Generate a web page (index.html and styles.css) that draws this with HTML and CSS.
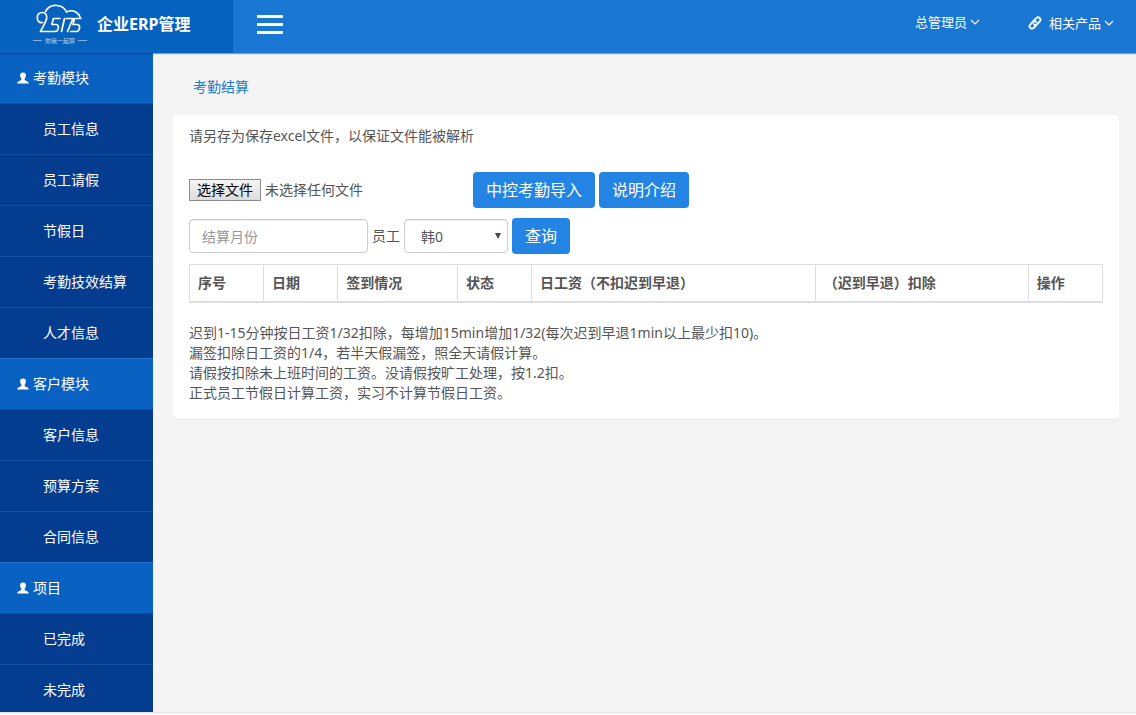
FILE: index.html
```html
<!DOCTYPE html>
<html lang="zh-CN">
<head>
<meta charset="utf-8">
<meta name="viewport" content="width=device-width, initial-scale=1">
<title>企业ERP管理</title>
<link rel="stylesheet" href="styles.css">
</head>
<body>
<svg class="symbols" aria-hidden="true">
  <symbol id="user" viewBox="0 0 12 12"><path d="M6 0.500C3.900.5 3 1.800 3.100 3.600c.1 1.500.6 2.300 1.200 3v1.300C3.700 8.700.4 9 .2 11.500h11.600C11.600 9 8.300 8.700 7.700 7.900V6.600c.6-.7 1.100-1.500 1.200-3C9 1.800 8.100.5 6 .5z" fill="currentColor"/></symbol>
  <symbol id="chevron" viewBox="0 0 10 6"><path d="M1 1l4 4 4-4" fill="none" stroke="currentColor" stroke-width="1.200"/></symbol>
</svg>
<header class="topbar">
  <div class="brand">
    <svg class="logo" viewBox="0 0 56 42" role="img" aria-label="25175">
      <g fill="none" stroke="currentColor" stroke-width="1.700" stroke-linejoin="round" stroke-linecap="round">
        <path d="M9.500 19.500c-3.200.8-5.200-1.500-5.200-4.500 0-3.500 2.200-5.500 5-5.500 3.500 0 5.200 2.800 4.200 6.500-.8 3.500-3.500 7.500-6 12.500h8"/>
        <path d="M12.500 8.500c2-4 6.500-6.300 11-6 5 .3 8.500 2.800 10 6.500 4-1.800 7.500-1.500 10 .5 1.800 1.200 3 2.800 3.500 4.500"/>
        <path d="M27 15.500h-6.500l-1.700 6h4.500c3.200 0 2.700 7-1.300 7h-5.500M31.500 15.500l-3 13M33.500 15.500h6.500l-5.500 13M48 15.500h-6.500l-1.500 6h4.500c3.200 0 2.700 7-1.300 7h-5.500"/>
      </g>
      <path d="M0 37.500h9M45 37.500h9" stroke="currentColor" opacity=".5"/>
      <text class="logo-slogan" x="27" y="40" text-anchor="middle">你我一起算</text>
    </svg>
    <h1 class="brand-name">企业ERP管理</h1>
  </div>
  <button class="menu-toggle" type="button" aria-label="切换菜单"><span></span><span></span><span></span></button>
  <nav class="top-links" aria-label="账户">
    <a href="#">总管理员<svg class="chevron"><use href="#chevron"/></svg></a>
    <a href="#" class="products"><svg class="link-icon" viewBox="0 0 14 14"><g fill="none" stroke="currentColor" stroke-width="1.900" stroke-linecap="round"><path d="M5.500 5L8.300 2.100a2.300 2.300 0 0 1 3.500 3.200L9.300 8a2.300 2.300 0 0 1-3.300.2"/><path d="M8.500 9l-2.800 2.900a2.300 2.300 0 0 1-3.500-3.200L4.700 6A2.300 2.300 0 0 1 8 5.800"/></g></svg>相关产品<svg class="chevron"><use href="#chevron"/></svg></a>
  </nav>
</header>
<div class="layout">
  <nav class="sidebar" aria-label="主菜单">
    <a class="section" href="#"><svg class="user-icon"><use href="#user"/></svg>考勤模块</a>
    <a href="#">员工信息</a>
    <a href="#">员工请假</a>
    <a href="#">节假日</a>
    <a href="#">考勤技效结算</a>
    <a href="#">人才信息</a>
    <a class="section" href="#"><svg class="user-icon"><use href="#user"/></svg>客户模块</a>
    <a href="#">客户信息</a>
    <a href="#">预算方案</a>
    <a href="#">合同信息</a>
    <a class="section" href="#"><svg class="user-icon"><use href="#user"/></svg>项目</a>
    <a href="#">已完成</a>
    <a href="#">未完成</a>
  </nav>
  <main class="content">
    <a class="crumb" href="#">考勤结算</a>
    <section class="panel">
      <p class="hint">请另存为保存excel文件，以保证文件能被解析</p>
      <form class="import-row">
        <div class="file-field">
          <input class="file-input" type="file" id="file">
          <label class="file-button" for="file">选择文件</label>
          <span>未选择任何文件</span>
        </div>
        <button class="btn" type="button">中控考勤导入</button>
        <button class="btn" type="button">说明介绍</button>
      </form>
      <form class="search-row">
        <input class="field month" type="text" placeholder="结算月份" aria-label="结算月份">
        <label for="staff">员工</label>
        <div class="select-wrap">
          <select class="field staff" id="staff"><option>韩0</option></select>
        </div>
        <button class="btn" type="button">查询</button>
      </form>
      <table class="records">
        <colgroup><col class="c-small"><col class="c-small"><col class="c-sign"><col class="c-small"><col class="c-wage"><col class="c-deduct"><col class="c-small"></colgroup>
        <thead><tr><th>序号</th><th>日期</th><th>签到情况</th><th>状态</th><th>日工资（不扣迟到早退）</th><th>（迟到早退）扣除</th><th>操作</th></tr></thead>
      </table>
      <p class="rules">迟到1-15分钟按日工资1/32扣除，每增加15min增加1/32(每次迟到早退1min以上最少扣10)。<br>漏签扣除日工资的1/4，若半天假漏签，照全天请假计算。<br>请假按扣除未上班时间的工资。没请假按旷工处理，按1.2扣。<br>正式员工节假日计算工资，实习不计算节假日工资。</p>
    </section>
  </main>
</div>
<footer class="page-end"></footer>
</body>
</html>
```
FILE: styles.css
```css
* { box-sizing: border-box; }

body {
  margin: 0;
  height: 100vh;
  display: flex;
  flex-direction: column;
  overflow: hidden;
  background: #f4f4f4;
  color: #555;
  font: 14px/20px "Noto Sans", "Noto Sans CJK SC", sans-serif;
}

a { color: inherit; text-decoration: none; }
p, h1 { margin: 0; }
button, input, select { font-family: inherit; }

.symbols { position: absolute; width: 0; height: 0; }

.topbar {
  flex: none;
  height: 53px;
  display: flex;
  background: #1976d3;
  color: #fff;
  box-shadow: 0 1px 1px rgba(0, 20, 70, .4);
  z-index: 1;
}

.brand {
  width: 233px;
  display: flex;
  align-items: center;
  padding: 0 0 6px 33px;
  gap: 8px;
  background: #0562bf;
}

.logo { width: 56px; height: 42px; flex: none; }
.logo-slogan { font-size: 6px; fill: currentColor; opacity: .7; }
.brand-name { font-size: 16px; line-height: 24px; font-weight: 700; white-space: nowrap; }

.menu-toggle {
  align-self: center;
  display: flex;
  flex-direction: column;
  gap: 5px;
  margin: 0 0 5px 24px;
  padding: 0;
  border: 0;
  background: none;
}

.menu-toggle span { width: 26px; height: 3px; background: #fff; }

.top-links {
  margin-left: auto;
  padding: 0 22px 9px 0;
  display: flex;
  align-items: center;
  gap: 48px;
  font-size: 13px;
}

.top-links a { display: flex; align-items: center; }
.top-links .products { padding-top: 2px; }
.chevron { width: 10px; height: 6px; margin-left: 3px; }
.link-icon { width: 14px; height: 14px; margin-right: 7px; }

.layout { flex: 1; min-height: 0; display: flex; }

.sidebar {
  flex: none;
  width: 153px;
  overflow: hidden;
  background: #043d90;
  color: #fff;
}

.sidebar a {
  display: flex;
  align-items: center;
  height: 51px;
  padding-left: 43px;
  border-top: 1px solid #134f9f;
}

.sidebar .section { padding-left: 17px; background: #0962c2; border-color: #1f70ca; }
.sidebar .section:first-child { height: 50px; border-top: 0; }
.user-icon { width: 12px; height: 12px; margin-right: 4px; }

.content { flex: 1; min-width: 0; padding: 24px 17px 0 20px; }
.crumb { display: block; margin: 0 0 18px 20px; color: #2779c6; }

.panel {
  padding: 11px 16px 16px;
  border-radius: 4px;
  background: #fff;
  box-shadow: 0 1px 1px rgba(0, 0, 0, .05);
}

.import-row { display: flex; align-items: center; gap: 4px; margin-top: 26px; }
.file-field { position: relative; display: flex; align-items: center; gap: 4px; width: 280px; }
.file-input { position: absolute; inset: 0; width: 100%; opacity: 0; }

.file-button {
  padding: 0 7px;
  border: 1px solid #8c8c8c;
  background: linear-gradient(#f5f5f5, #dcdcdc);
  color: #000;
}

.btn {
  height: 36px;
  padding: 0 13px;
  border: 0;
  border-radius: 4px;
  background: #2484e3;
  color: #fff;
  font-size: 16px;
  line-height: 24px;
}

.search-row { display: flex; align-items: center; gap: 4px; margin: 10px 0; }

.field {
  height: 34px;
  border: 1px solid #ccc;
  border-radius: 4px;
  background: #fff;
  box-shadow: inset 0 1px 1px rgba(0, 0, 0, .075);
  color: #555;
  font-size: 14px;
}

.field::placeholder { color: #999; }
.month { width: 179px; padding: 0 12px; }
.select-wrap { position: relative; }
.staff { display: block; width: 104px; padding: 0 16px; appearance: none; }

.select-wrap::after {
  content: "";
  position: absolute;
  top: 14px;
  right: 7px;
  border: 3px solid transparent;
  border-top: 6px solid #444;
  border-bottom: 0;
  pointer-events: none;
}

.records { width: 100%; table-layout: fixed; border-collapse: collapse; }
.records th { padding: 8px; border: 1px solid #ddd; border-bottom-width: 2px; text-align: left; white-space: nowrap; }
.c-small { width: 8.1%; }
.c-sign { width: 13.1%; }
.c-wage { width: 31%; }
.c-deduct { width: 23.3%; }

.rules { margin-top: 20px; }

.page-end { flex: none; height: 3px; border-top: 1px solid #e5e5e5; background: #f8f8f8; }
```
